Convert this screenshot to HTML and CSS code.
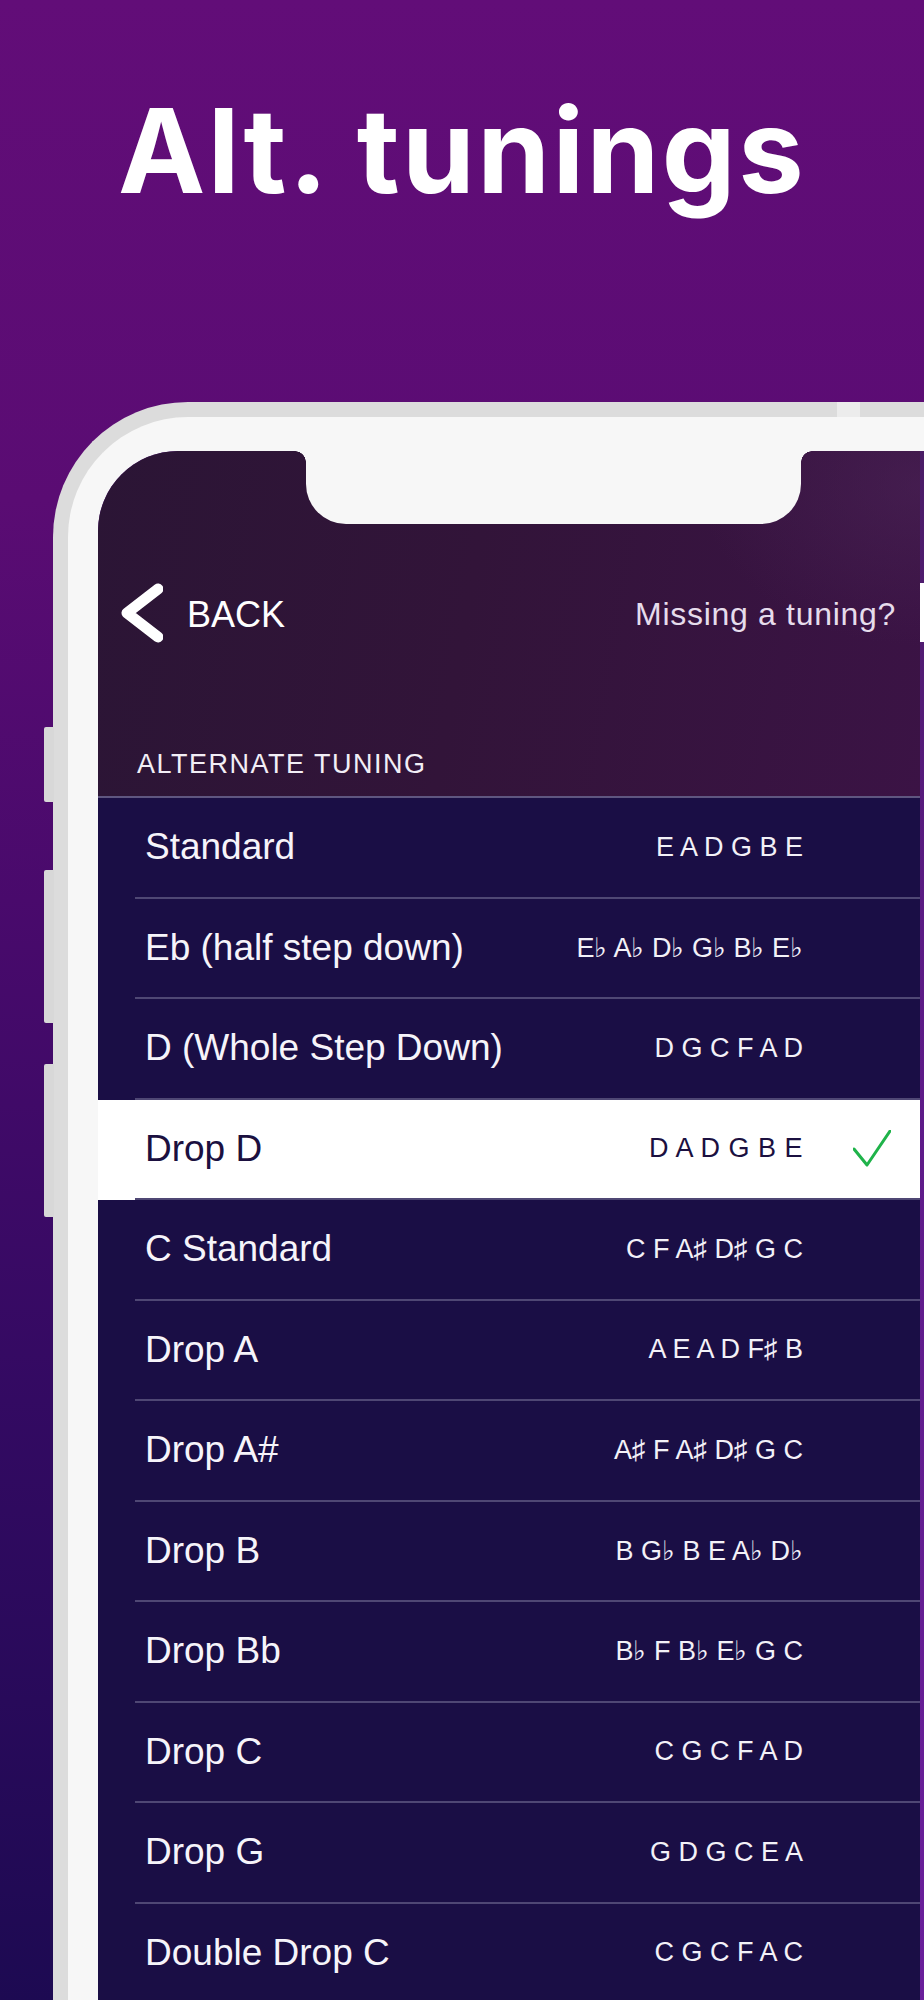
FILE: index.html
```html
<!DOCTYPE html>
<html lang="en">
<head>
<meta charset="utf-8">
<title>Alt. tunings</title>
<link rel="stylesheet" href="styles.css">
</head>
<body>
<div class="page">
  <h1 class="title">Alt. tunings</h1>
  <div class="phone">
    <span class="side-btn btn-1"></span>
    <span class="side-btn btn-2"></span>
    <span class="side-btn btn-3"></span>
    <span class="frame-seam"></span>
    <div class="screen">
      <div class="notch"></div>
      <span class="edge-icon"></span>
      <div class="app">
        <header class="app-header">
          <div class="nav">
            <div class="back">
              <svg class="chev" width="44" height="64" viewBox="0 0 44 64" aria-hidden="true">
                <polyline points="39,8 8,32 39,56" fill="none" stroke="#ffffff" stroke-width="11" stroke-linecap="round" stroke-linejoin="round"/>
              </svg>
              <span class="back-label">BACK</span>
            </div>
            <span class="missing">Missing a tuning?</span>
          </div>
          <div class="section-label">ALTERNATE TUNING</div>
        </header>
        <ul class="list">
          <li class="row"><div class="row-inner"><span class="name">Standard</span><span class="notes">E A D G B E</span><span class="mark"></span></div></li>
          <li class="row"><div class="row-inner"><span class="name">Eb (half step down)</span><span class="notes">E♭ A♭ D♭ G♭ B♭ E♭</span><span class="mark"></span></div></li>
          <li class="row"><div class="row-inner"><span class="name">D (Whole Step Down)</span><span class="notes">D G C F A D</span><span class="mark"></span></div></li>
          <li class="row selected"><div class="row-inner"><span class="name">Drop D</span><span class="notes">D A D G B E</span><span class="mark"><svg width="38" height="38" viewBox="0 0 38 38" aria-hidden="true"><polyline points="1,19 14,35 37,1" fill="none" stroke="#1fb34a" stroke-width="3" stroke-linecap="round" stroke-linejoin="round"/></svg></span></div></li>
          <li class="row"><div class="row-inner"><span class="name">C Standard</span><span class="notes">C F A♯ D♯ G C</span><span class="mark"></span></div></li>
          <li class="row"><div class="row-inner"><span class="name">Drop A</span><span class="notes">A E A D F♯ B</span><span class="mark"></span></div></li>
          <li class="row"><div class="row-inner"><span class="name">Drop A#</span><span class="notes">A♯ F A♯ D♯ G C</span><span class="mark"></span></div></li>
          <li class="row"><div class="row-inner"><span class="name">Drop B</span><span class="notes">B G♭ B E A♭ D♭</span><span class="mark"></span></div></li>
          <li class="row"><div class="row-inner"><span class="name">Drop Bb</span><span class="notes">B♭ F B♭ E♭ G C</span><span class="mark"></span></div></li>
          <li class="row"><div class="row-inner"><span class="name">Drop C</span><span class="notes">C G C F A D</span><span class="mark"></span></div></li>
          <li class="row"><div class="row-inner"><span class="name">Drop G</span><span class="notes">G D G C E A</span><span class="mark"></span></div></li>
          <li class="row"><div class="row-inner"><span class="name">Double Drop C</span><span class="notes">C G C F A C</span><span class="mark"></span></div></li>
        </ul>
      </div>
      <div class="edge-strip"></div>
    </div>
  </div>
</div>
</body>
</html>
```

FILE: styles.css
```css
* { box-sizing: border-box; }

html, body {
  margin: 0;
  padding: 0;
}

body {
  width: 924px;
  height: 2000px;
  overflow: hidden;
  background: linear-gradient(180deg, #620d78 0%, #5a0c73 25%, #490a6c 45%, #330a62 70%, #1d0a52 100%);
  font-family: "Liberation Sans", Arial, sans-serif;
}

.page {
  width: 924px;
  height: 2000px;
  overflow: hidden;
}

.title {
  margin: 0;
  padding-top: 93px;
  height: 210px;
  font-family: "Inter", "Liberation Sans", sans-serif;
  font-weight: 700;
  font-size: 117px;
  line-height: 116px;
  letter-spacing: 2.4px;
  color: #ffffff;
  text-align: center;
}

.phone {
  position: relative;
  margin-top: 192px;
  margin-left: 53px;
  width: 900px;
  height: 1700px;
  border: 15px solid #dcdcdc;
  border-right: none;
  border-bottom: none;
  border-top-left-radius: 135px;
  background: #f7f7f7;
  padding: 34px 0 0 30px;
}

.side-btn {
  position: absolute;
  left: -24px;
  width: 10px;
  background: #d8d8d8;
  border-radius: 2px 0 0 2px;
}
.btn-1 { top: 310px; height: 75px; }
.btn-2 { top: 453px; height: 153px; }
.btn-3 { top: 647px; height: 153px; }

.frame-seam {
  position: absolute;
  top: -15px;
  left: 769px;
  width: 23px;
  height: 15px;
  background: #ececec;
}

.screen {
  position: relative;
  display: flex;
  width: 826px;
  height: 1600px;
  border-top-left-radius: 80px;
  overflow: hidden;
  background: #5d1a86;
}

.app {
  width: 822px;
  flex: none;
}

.edge-strip {
  flex: 1;
  background: linear-gradient(180deg, #4a1c66 0%, #5b1a84 30%, #6a1f9c 100%);
}

.notch {
  position: absolute;
  top: 0;
  left: 208px;
  width: 495px;
  height: 73px;
  background: #f7f7f7;
  border-radius: 0 0 40px 40px;
  z-index: 2;
}
.notch::before,
.notch::after {
  content: "";
  position: absolute;
  top: 0;
  width: 11px;
  height: 11px;
}
.notch::before {
  left: -11px;
  background: radial-gradient(circle at 0 100%, transparent 10.5px, #f7f7f7 11px);
}
.notch::after {
  right: -11px;
  background: radial-gradient(circle at 100% 100%, transparent 10.5px, #f7f7f7 11px);
}

.edge-icon {
  position: absolute;
  top: 132px;
  right: 0;
  width: 4px;
  height: 59px;
  background: #ffffff;
  z-index: 2;
}

.app-header {
  height: 345px;
  padding-top: 130px;
  background:
    radial-gradient(ellipse 220px 160px at 100% 10%, rgba(80, 40, 92, 0.45), rgba(80, 40, 92, 0) 100%),
    linear-gradient(100deg, #2b1535 0%, #321439 45%, #3b1345 100%);
}

.nav {
  display: flex;
  align-items: center;
  justify-content: space-between;
  height: 64px;
  padding-left: 21px;
  padding-right: 24px;
}

.back {
  display: flex;
  align-items: center;
  gap: 24px;
}

.chev { display: block; }

.back-label {
  font-size: 36px;
  color: #ffffff;
  padding-top: 4px;
}

.missing {
  font-size: 32px;
  letter-spacing: 0.7px;
  color: #e6dcec;
  padding-top: 2px;
}

.section-label {
  margin-top: 103px;
  padding-left: 39px;
  font-size: 27px;
  line-height: 32px;
  letter-spacing: 1.5px;
  color: #f2eef6;
}

.list {
  list-style: none;
  margin: 0;
  padding: 0;
  border-top: 2px solid #5f5680;
  background: #1a0e45;
}

.row {
  height: 100.5px;
  padding-left: 37px;
}

.row.selected {
  background: #ffffff;
}

.row-inner {
  display: flex;
  align-items: center;
  height: 100%;
  padding-left: 10px;
  border-bottom: 2px solid #4f4774;
}

.name {
  flex: 1;
  font-size: 37px;
  color: #f6f4fa;
}

.notes {
  font-size: 27px;
  color: #f3f1f8;
  white-space: pre;
}

.mark {
  width: 117px;
  flex: none;
  padding-left: 50px;
  display: flex;
  align-items: center;
}

.row.selected .name,
.row.selected .notes {
  color: #1b1040;
}
.row.selected .notes {
  letter-spacing: 0.5px;
}
```
